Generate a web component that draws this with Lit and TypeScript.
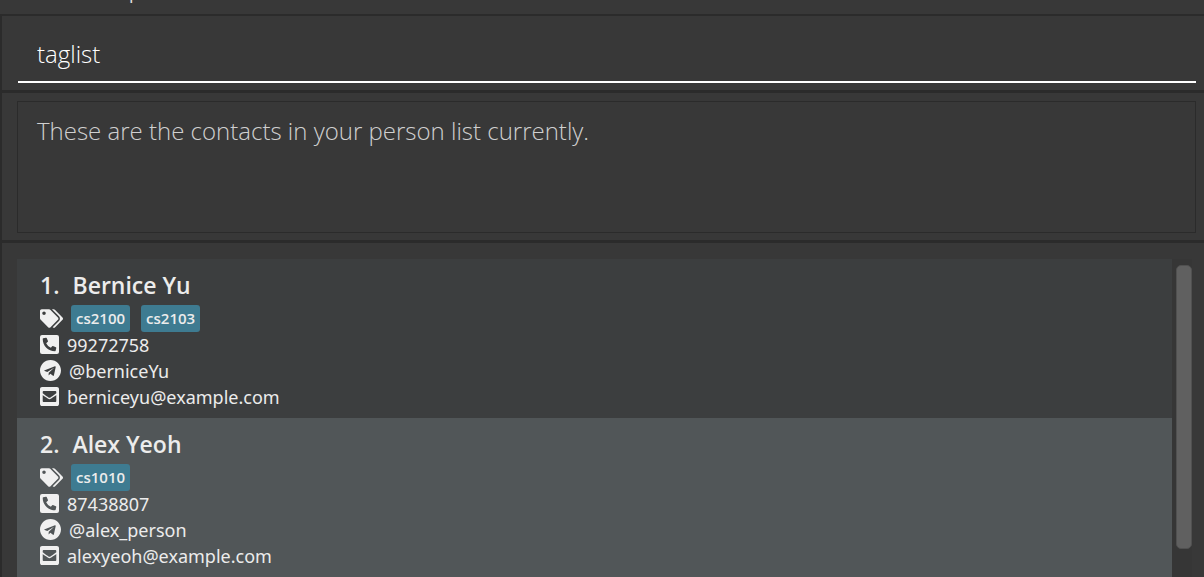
import { LitElement, html, css, svg } from "lit";
import { customElement, property, state } from "lit/decorators.js";
import { classMap } from "lit/directives/class-map.js";

interface Person {
  name: string;
  tags: string[];
  phone: string;
  telegram: string;
  email: string;
}

const people: Person[] = [
  {
    name: "Bernice Yu",
    tags: ["cs2100", "cs2103"],
    phone: "99272758",
    telegram: "@berniceYu",
    email: "berniceyu@example.com",
  },
  {
    name: "Alex Yeoh",
    tags: ["cs1010"],
    phone: "87438807",
    telegram: "@alex_person",
    email: "alexyeoh@example.com",
  },
];

const tagsIcon = html`<svg class="icon tags-icon" viewBox="0 0 640 512" aria-hidden="true">
  ${svg`<path d="M497.941 225.941L286.059 14.059A48 48 0 0 0 252.118 0H48C21.49 0 0 21.49 0 48v204.118a48 48 0 0 0 14.059 33.941l211.882 211.882c18.744 18.745 49.136 18.746 67.882 0l204.118-204.118c18.745-18.745 18.745-49.137 0-67.882zM112 160c-26.51 0-48-21.49-48-48s21.49-48 48-48 48 21.49 48 48-21.49 48-48 48zm513.941 133.823L421.823 497.941c-18.745 18.745-49.137 18.745-67.882 0l-.36-.36L527.64 323.522c16.999-16.999 26.36-39.6 26.36-63.64s-9.362-46.641-26.36-63.64L331.397 0h48.721a48 48 0 0 1 33.941 14.059l211.882 211.882c18.745 18.745 18.745 49.137 0 67.882z"/>`}
</svg>`;

const phoneIcon = html`<svg class="icon square-icon" viewBox="0 32 448 448" aria-hidden="true">
  ${svg`<path d="M400 32H48A48 48 0 0 0 0 80v352a48 48 0 0 0 48 48h352a48 48 0 0 0 48-48V80a48 48 0 0 0-48-48zm-16.39 307.37l-15 65A15 15 0 0 1 354 416C194 416 64 286.29 64 126a15.7 15.7 0 0 1 11.63-14.61l65-15A18.23 18.23 0 0 1 144 96a16.27 16.27 0 0 1 13.79 9.09l30 70A17.9 17.9 0 0 1 189 181a17 17 0 0 1-5.5 11.61l-37.89 31a231.91 231.91 0 0 0 110.78 110.78l31-37.89A17 17 0 0 1 299 291a17.85 17.85 0 0 1 5.91 1.21l70 30A16.25 16.25 0 0 1 384 336a17.41 17.41 0 0 1-.39 3.37z"/>`}
</svg>`;

const telegramIcon = html`<svg class="icon round-icon" viewBox="0 8 496 496" aria-hidden="true">
  ${svg`<path d="M248 8C111 8 0 119 0 256s111 248 248 248 248-111 248-248S385 8 248 8zm121.8 169.9l-40.7 191.8c-3 13.6-11.1 16.9-22.4 10.5l-62-45.7-29.9 28.8c-3.3 3.3-6.1 6.1-12.5 6.1l4.4-63.1 114.9-103.8c5-4.4-1.1-6.9-7.7-2.5l-142 89.4-61.2-19.1c-13.3-4.2-13.6-13.3 2.8-19.7l239.1-92.2c11.1-4 20.8 2.7 17.2 19.5z"/>`}
</svg>`;

const mailIcon = html`<svg class="icon square-icon" viewBox="0 32 448 448" aria-hidden="true">
  ${svg`<path d="M400 32H48C21.49 32 0 53.49 0 80v352c0 26.51 21.49 48 48 48h352c26.51 0 48-21.49 48-48V80c0-26.51-21.49-48-48-48zM178.117 262.104C87.429 196.287 88.353 196.121 64 177.167V152c0-13.255 10.745-24 24-24h272c13.255 0 24 10.745 24 24v25.167c-24.371 18.969-23.434 19.124-114.117 84.938-10.5 7.655-31.392 26.12-45.883 25.894-14.503.218-35.367-18.227-45.883-25.895zM384 217.775V360c0 13.255-10.745 24-24 24H88c-13.255 0-24-10.745-24-24V217.775c13.958 10.794 33.329 25.236 95.303 70.214 14.162 10.341 37.975 32.145 64.697 32.01 26.887.134 51.036-22.041 64.72-32.025 61.958-44.964 81.325-59.408 95.28-70.199z"/>`}
</svg>`;

@customElement("person-card")
export class PersonCard extends LitElement {
  @property({ attribute: false }) person!: Person;
  @property({ type: Number }) index = 1;

  static styles = css`
    :host {
      display: block;
      color: #ececec;
      font-family: "Noto Sans", "Open Sans", sans-serif;
    }
    .card {
      padding: 12px 23px 8px;
    }
    .name {
      display: flex;
      gap: 13px;
      margin: 0 0 6px;
      font-family: "Open Sans", sans-serif;
      font-size: 23px;
      line-height: 28px;
      font-weight: 600;
    }
    .row {
      display: flex;
      align-items: center;
      height: 26px;
      gap: 8px;
      font-size: 18px;
      line-height: 26px;
    }
    .tags {
      height: 27px;
    }
    .tag {
      padding: 0 5px;
      margin-right: 3px;
      border-radius: 3px;
      background: #3e7b91;
      font-family: "Open Sans", sans-serif;
      font-size: 15px;
      line-height: 27px;
      font-weight: 600;
    }
    .icon {
      flex: none;
      fill: #f0f0f0;
    }
    .tags-icon {
      width: 23px;
      height: 19px;
    }
    .square-icon {
      width: 19px;
      height: 19px;
      margin-bottom: 2px;
    }
    .round-icon {
      width: 21px;
      height: 21px;
      margin-bottom: 2px;
    }
  `;

  render() {
    const p = this.person;
    return html`
      <article class="card">
        <h2 class="name"><span>${this.index}.</span><span>${p.name}</span></h2>
        <div class="row tags">${tagsIcon}${p.tags.map((t) => html`<span class="tag">${t}</span>`)}</div>
        <div class="row">${phoneIcon}<span>${p.phone}</span></div>
        <div class="row">${telegramIcon}<span>${p.telegram}</span></div>
        <div class="row">${mailIcon}<span>${p.email}</span></div>
      </article>
    `;
  }
}

@customElement("app-root")
export class AppRoot extends LitElement {
  @state() private selected = 1;

  static styles = css`
    :host {
      display: flex;
      flex-direction: column;
      height: 100vh;
      overflow: hidden;
      background: #383838;
      font-family: "Open Sans", "Noto Sans", sans-serif;
    }
    * {
      box-sizing: border-box;
    }
    .menu {
      flex: none;
      display: flex;
      align-items: flex-end;
      height: 14px;
      padding: 0 92px 10px 101px;
      overflow: hidden;
    }
    .menu-item {
      padding: 0;
      border: 0;
      background: none;
      color: #e0e0e0;
      font: 18px/24px "Open Sans", sans-serif;
    }
    .pane {
      flex: none;
      border: solid #2b2b2b;
      border-width: 2px 0 0 2px;
    }
    .command {
      padding: 8px 8px 7px 16px;
    }
    .command-box {
      display: block;
      width: 100%;
      height: 59px;
      padding: 2px 19px 0;
      border: 0;
      border-bottom: 2px solid #ffffff;
      outline: 0;
      background: none;
      color: #ffffff;
      font: 300 24px "Open Sans", sans-serif;
    }
    .result {
      border-top-width: 3px;
      padding: 8px 8px 7px 15px;
    }
    .result-box {
      display: block;
      width: 100%;
      height: 132px;
      padding: 13px 19px;
      border: 1px solid #2b2b2b;
      outline: 0;
      resize: none;
      background: none;
      color: #d0d0d0;
      font: 300 24px/32px "Open Sans", sans-serif;
    }
    .people {
      flex: 1;
      min-height: 0;
      display: flex;
      border-top-width: 3px;
      padding: 16px 12px 0 15px;
      overflow: hidden;
    }
    .list {
      flex: 1;
      min-width: 0;
      margin: 0;
      padding: 0;
      list-style: none;
    }
    .item {
      background: #3c3e3f;
    }
    .item.selected {
      background: #515658;
    }
    .scrollbar {
      flex: none;
      width: 20px;
      padding: 6px 0 28px 4px;
      background: #363636;
    }
    .thumb {
      height: 100%;
      border: 1px solid #505050;
      border-radius: 5px;
      background: #606060;
    }
  `;

  render() {
    return html`
      <nav class="menu"><button class="menu-item">Help</button></nav>
      <section class="pane command">
        <input class="command-box" type="text" aria-label="Command" .value=${"taglist"} />
      </section>
      <section class="pane result">
        <textarea
          class="result-box"
          readonly
          aria-label="Result"
          .value=${"These are the contacts in your person list currently."}
        ></textarea>
      </section>
      <section class="pane people">
        <ol class="list">
          ${people.map(
            (p, i) => html`<li
              class=${classMap({ item: true, selected: i === this.selected })}
              @click=${() => (this.selected = i)}
            >
              <person-card .person=${p} .index=${i + 1}></person-card>
            </li>`
          )}
        </ol>
        <div class="scrollbar"><div class="thumb"></div></div>
      </section>
    `;
  }
}
